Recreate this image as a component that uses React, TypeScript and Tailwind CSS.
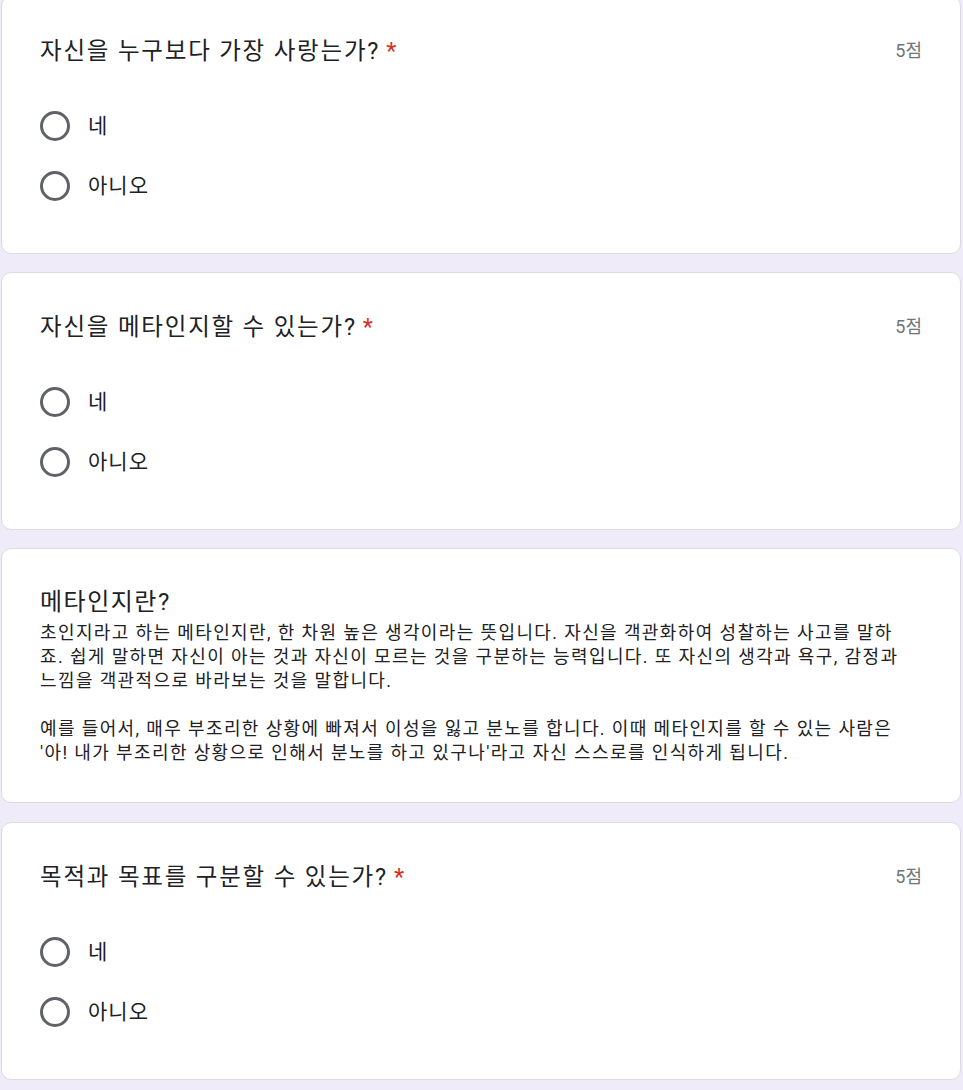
import React from "react";

const FONT = { fontFamily: 'Roboto, "Noto Sans CJK KR", "Noto Sans", sans-serif' };

function Radio({ label }: { label: string }) {
  return (
    <div className="flex h-[60px] items-center">
      <div className="h-[30px] w-[30px] shrink-0 rounded-full border-[3px] border-[#5f6368]" />
      <span className="ml-[18px] text-[21px] leading-[30px] tracking-[1px] text-[#202124]">{label}</span>
    </div>
  );
}

function Question({ title, mt }: { title: string; mt: string }) {
  return (
    <div
      className={
        "ml-[1px] w-[960px] rounded-[10px] border border-[#dadce0] bg-white px-[38px] pt-[38px] pb-[37px] " + mt
      }
    >
      <div className="flex items-start justify-between">
        <div className="text-[23.5px] leading-[32px] tracking-[1.8px] text-[#202124]">
          {title}
          <span className="ml-[6px] text-[#d93025]">*</span>
        </div>
        <div className="pt-[2px] text-[18px] leading-[28px] text-[#70757a]">5점</div>
      </div>
      <div className="mt-[29px]">
        <Radio label="네" />
        <Radio label="아니오" />
      </div>
    </div>
  );
}

export default function App() {
  return (
    <div className="min-h-[1090px] overflow-hidden bg-[#f0ebf8]" style={FONT}>
      <Question mt="mt-[-4px]" title="자신을 누구보다 가장 사랑는가?" />
      <Question mt="mt-[18px]" title="자신을 메타인지할 수 있는가?" />
      <div className="mt-[18px] ml-[1px] w-[960px] rounded-[10px] border border-[#dadce0] bg-white px-[38px] pt-[37px] pb-[37px]">
        <div className="text-[24px] leading-[32px] tracking-[1.5px] text-[#202124]">메타인지란?</div>
        <div className="mt-[3px] text-[18px] leading-[24px] tracking-[1.38px] text-[#202124]">
          초인지라고 하는 메타인지란, 한 차원 높은 생각이라는 뜻입니다. 자신을 객관화하여 성찰하는 사고를 말하
          <br />
          죠. 쉽게 말하면 자신이 아는 것과 자신이 모르는 것을 구분하는 능력입니다. 또 자신의 생각과 욕구, 감정과
          <br />
          느낌을 객관적으로 바라보는 것을 말합니다.
          <br />
          <br />
          예를 들어서, 매우 부조리한 상황에 빠져서 이성을 잃고 분노를 합니다. 이때 메타인지를 할 수 있는 사람은
          <br />
          '아! 내가 부조리한 상황으로 인해서 분노를 하고 있구나'라고 자신 스스로를 인식하게 됩니다.
        </div>
      </div>
      <Question mt="mt-[19px]" title="목적과 목표를 구분할 수 있는가?" />
      <div className="h-[20px]" />
    </div>
  );
}
